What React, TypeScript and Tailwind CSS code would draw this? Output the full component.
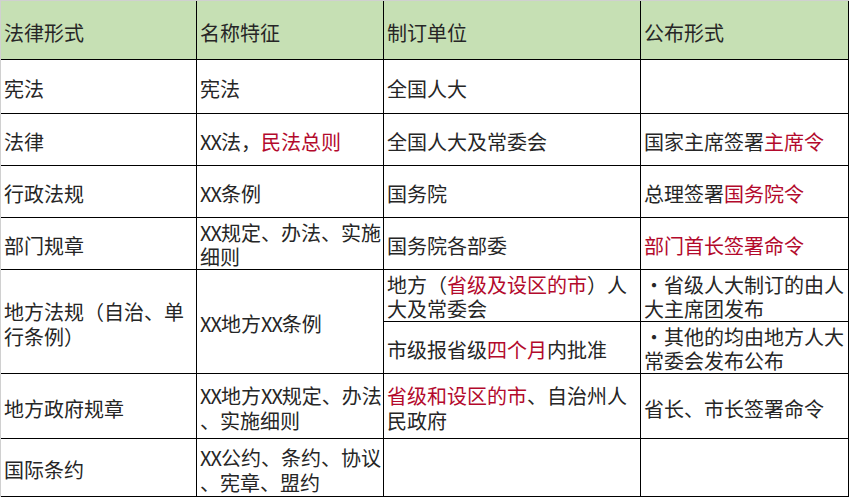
import React from "react";

const R = ({ children }: { children: React.ReactNode }) => (
  <span className="text-[#b3092c]">{children}</span>
);
const X = () => <span className="tracking-[-1px]">XX</span>;

const cell =
  "border-r border-b border-black flex items-center pl-[3px] pt-[4px] whitespace-nowrap leading-[25px]";
const cell2 =
  "border-r border-b border-black flex items-center pl-[3px] pt-[2px] whitespace-nowrap leading-[24px]";

export default function App() {
  return (
    <div
      className="w-[849px] h-[497px] bg-white border-t border-l border-[#d0d0d0] text-[20px] text-[#262626]"
      style={{ fontFamily: '"Noto Sans CJK SC", "Noto Sans", sans-serif' }}
    >
      <div className="grid grid-cols-[196px_187px_257px_208px] grid-rows-[59px_54px_52px_52px_52px_52px_52px_65px_58px] box-border">
        <div className={`${cell} bg-[#c6e0b4]`}>法律形式</div>
        <div className={`${cell} bg-[#c6e0b4]`}>名称特征</div>
        <div className={`${cell} bg-[#c6e0b4]`}>制订单位</div>
        <div className={`${cell} bg-[#c6e0b4]`}>公布形式</div>

        <div className={cell}>宪法</div>
        <div className={cell}>宪法</div>
        <div className={cell}>全国人大</div>
        <div className={cell}></div>

        <div className={cell}>法律</div>
        <div className={cell}>
          <span>
            <X />法，<R>民法总则</R>
          </span>
        </div>
        <div className={cell}>全国人大及常委会</div>
        <div className={cell}>
          <span>
            国家主席签署<R>主席令</R>
          </span>
        </div>

        <div className={cell}>行政法规</div>
        <div className={cell}>
          <span>
            <X />条例
          </span>
        </div>
        <div className={cell}>国务院</div>
        <div className={cell}>
          <span>
            总理签署<R>国务院令</R>
          </span>
        </div>

        <div className={cell}>部门规章</div>
        <div className={cell2}>
          <span>
            <X />规定、办法、实施
            <br />
            细则
          </span>
        </div>
        <div className={cell}>国务院各部委</div>
        <div className={cell}>
          <R>部门首长签署命令</R>
        </div>

        <div className={`${cell} row-span-2`}>
          <span>
            地方法规（自治、单
            <br />
            行条例）
          </span>
        </div>
        <div className={`${cell} row-span-2`}>
          <span>
            <X />地方<X />条例
          </span>
        </div>
        <div className={cell2}>
          <span>
            地方（<R>省级及设区的市</R>）人
            <br />
            大及常委会
          </span>
        </div>
        <div className={cell2}>
          <span>
            ·省级人大制订的由人
            <br />
            大主席团发布
          </span>
        </div>
        <div className={cell}>
          <span>
            市级报省级<R>四个月</R>内批准
          </span>
        </div>
        <div className={cell2}>
          <span>
            ·其他的均由地方人大
            <br />
            常委会发布公布
          </span>
        </div>

        <div className={cell}>地方政府规章</div>
        <div className={cell}>
          <span>
            <X />地方<X />规定、办法
            <br />
            、实施细则
          </span>
        </div>
        <div className={cell}>
          <span>
            <R>省级和设区的市</R>、自治州人
            <br />
            民政府
          </span>
        </div>
        <div className={cell}>省长、市长签署命令</div>

        <div className={cell}>国际条约</div>
        <div className={cell}>
          <span>
            <X />公约、条约、协议
            <br />
            、宪章、盟约
          </span>
        </div>
        <div className={cell}></div>
        <div className={cell}></div>
      </div>
    </div>
  );
}
